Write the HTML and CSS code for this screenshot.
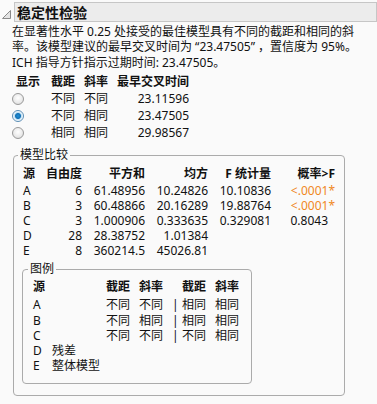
FILE: index.html
```html
<!DOCTYPE html>
<html lang="zh-CN">
  <head>
    <meta charset="UTF-8" />
    <meta name="viewport" content="width=device-width, initial-scale=1.0" />
    <title>稳定性检验</title>
    <link rel="stylesheet" href="styles.css">
  </head>
  <body>
    <div class="report">
      <div class="outline-head">
        <svg class="toggle" width="9" height="9" viewBox="0 0 9 9">
          <polygon points="0.5,8.5 8.5,0.5 8.5,8.5" fill="#e4e4e4" stroke="#8a8a8a" stroke-width="1" />
        </svg>
        <div class="title-box">稳定性检验</div>
      </div>

      <p class="summary">
        在显著性水平 0.25 处接受的最佳模型具有不同的截距和相同的斜<br />
        率。该模型建议的最早交叉时间为 “23.47505” ，置信度为 95%。<br />
        ICH 指导方针指示过期时间: 23.47505。
      </p>

      <table class="choices">
        <tr>
          <th class="c-show">显示</th>
          <th class="c-int">截距</th>
          <th class="c-slope">斜率</th>
          <th class="c-time">最早交叉时间</th>
        </tr>
        <tr>
          <td class="c-show"><span class="radio"></span></td>
          <td>不同</td>
          <td>不同</td>
          <td class="num">23.11596</td>
        </tr>
        <tr>
          <td class="c-show"><span class="radio on"></span></td>
          <td>不同</td>
          <td>相同</td>
          <td class="num">23.47505</td>
        </tr>
        <tr>
          <td class="c-show"><span class="radio"></span></td>
          <td>相同</td>
          <td>相同</td>
          <td class="num">29.98567</td>
        </tr>
      </table>

      <fieldset class="group">
        <legend>模型比较</legend>
        <table class="compare">
          <tr>
            <th class="m-src">源</th>
            <th class="m-df num">自由度</th>
            <th class="m-ss num">平方和</th>
            <th class="m-ms num">均方</th>
            <th class="m-f num">F 统计量</th>
            <th class="m-p num">概率&gt;F</th>
          </tr>
          <tr>
            <td>A</td><td class="num">6</td><td class="num">61.48956</td><td class="num">10.24826</td><td class="num">10.10836</td><td class="num sig">&lt;.0001*</td>
          </tr>
          <tr>
            <td>B</td><td class="num">3</td><td class="num">60.48866</td><td class="num">20.16289</td><td class="num">19.88764</td><td class="num sig">&lt;.0001*</td>
          </tr>
          <tr>
            <td>C</td><td class="num">3</td><td class="num">1.000906</td><td class="num">0.333635</td><td class="num">0.329081</td><td class="num nostar">0.8043</td>
          </tr>
          <tr>
            <td>D</td><td class="num">28</td><td class="num">28.38752</td><td class="num">1.01384</td><td></td><td></td>
          </tr>
          <tr>
            <td>E</td><td class="num">8</td><td class="num">360214.5</td><td class="num">45026.81</td><td></td><td></td>
          </tr>
        </table>

        <fieldset class="group legend-box">
          <legend>图例</legend>
          <table class="key">
            <tr>
              <th class="k-src">源</th>
              <th class="k-desc"></th>
              <th class="k-a">截距</th>
              <th class="k-b">斜率</th>
              <th class="k-bar"></th>
              <th class="k-a">截距</th>
              <th class="k-b">斜率</th>
            </tr>
            <tr><td>A</td><td></td><td>不同</td><td>不同</td><td class="k-bar">|</td><td>相同</td><td>相同</td></tr>
            <tr><td>B</td><td></td><td>不同</td><td>相同</td><td class="k-bar">|</td><td>相同</td><td>相同</td></tr>
            <tr><td>C</td><td></td><td>不同</td><td>不同</td><td class="k-bar">|</td><td>不同</td><td>相同</td></tr>
            <tr><td>D</td><td colspan="6">残差</td></tr>
            <tr><td>E</td><td colspan="6">整体模型</td></tr>
          </table>
        </fieldset>
      </fieldset>
    </div>
  </body>
</html>
```

FILE: styles.css
```css
body {
  margin: 0;
  background: #fafafa;
  color: #111;
  font-family: "Noto Sans", "Noto Sans CJK SC", sans-serif;
  font-size: 12px;
}
.report {
  padding-top: 2px;
}
.outline-head {
  display: flex;
  align-items: flex-start;
}
.toggle {
  margin: 8px 0 0 2px;
  flex: none;
}
.title-box {
  margin-left: 3px;
  width: 361px;
  height: 18px;
  line-height: 18px;
  padding-left: 2px;
  background: #ececec;
  border: 1px solid #c6c6c6;
  font-size: 14px;
  font-weight: bold;
  font-family: "Noto Sans CJK SC", sans-serif;
}
.summary {
  margin: 2px 0 0 12px;
  line-height: 15.4px;
}
table {
  border-collapse: collapse;
  border-spacing: 0;
}
th, td {
  padding: 0;
  white-space: nowrap;
  text-align: left;
}
th {
  font-weight: bold;
}
.num {
  text-align: right;
}

/* choices table */
.choices {
  margin: 4px 0 0 12px;
}
.choices th {
  height: 16px;
  line-height: 16px;
}
.choices td {
  height: 17px;
  line-height: 17px;
}
.c-show { width: 39px; }
.choices th.c-show { padding-left: 4px; width: 35px; }
.c-int { width: 33px; }
.c-slope { width: 33px; }
.c-time { width: 70px; }
.radio {
  display: inline-block;
  width: 10px;
  height: 10px;
  margin-top: 3px;
  vertical-align: top;
  border: 1px solid #9a9a9a;
  border-radius: 50%;
  background: radial-gradient(circle at 50% 40%, #ffffff 0%, #e9e9e9 60%, #cfcfcf 100%);
}
.radio.on {
  background: radial-gradient(circle, #1f8fd6 0, #1270b5 2.5px, #bfe0f4 3.5px, #ffffff 5px);
  border-color: #5a8db5;
}

/* group boxes */
.group {
  margin: 6px 0 0 13px;
  width: 332px;
  box-sizing: border-box;
  padding: 0 8px 11px 8px;
  border: 1px solid #ababab;
  border-radius: 4px;
}
.group legend {
  margin-left: -4px;
  padding: 0 2px;
  line-height: 16px;
}
.compare {
  margin: 2px 0 0 1px;
}
.compare th {
  height: 18px;
  line-height: 18px;
}
.compare td {
  height: 15px;
  line-height: 15px;
}
.m-src { width: 22px; }
.m-df { width: 37px; }
.m-ss { width: 63px; }
.m-ms { width: 63px; }
.m-f { width: 63px; }
.m-p { width: 64px; }
.sig {
  color: #f0881e;
}
.nostar {
  padding-right: 7px;
}

/* legend box */
.legend-box {
  margin: 3px 0 0 0;
  width: 230px;
  padding: 0 0 9px 9px;
}
.key th {
  height: 20px;
  line-height: 20px;
}
.key td {
  height: 15.3px;
  line-height: 15.3px;
}
.k-src { width: 19px; padding-left: 1px; }
.key td:first-child { padding-left: 1px; }
.k-desc { width: 54px; }
.k-a { width: 33px; }
.k-b { width: 31px; }
.k-bar { width: 10px; padding-left: 2px; }
```
